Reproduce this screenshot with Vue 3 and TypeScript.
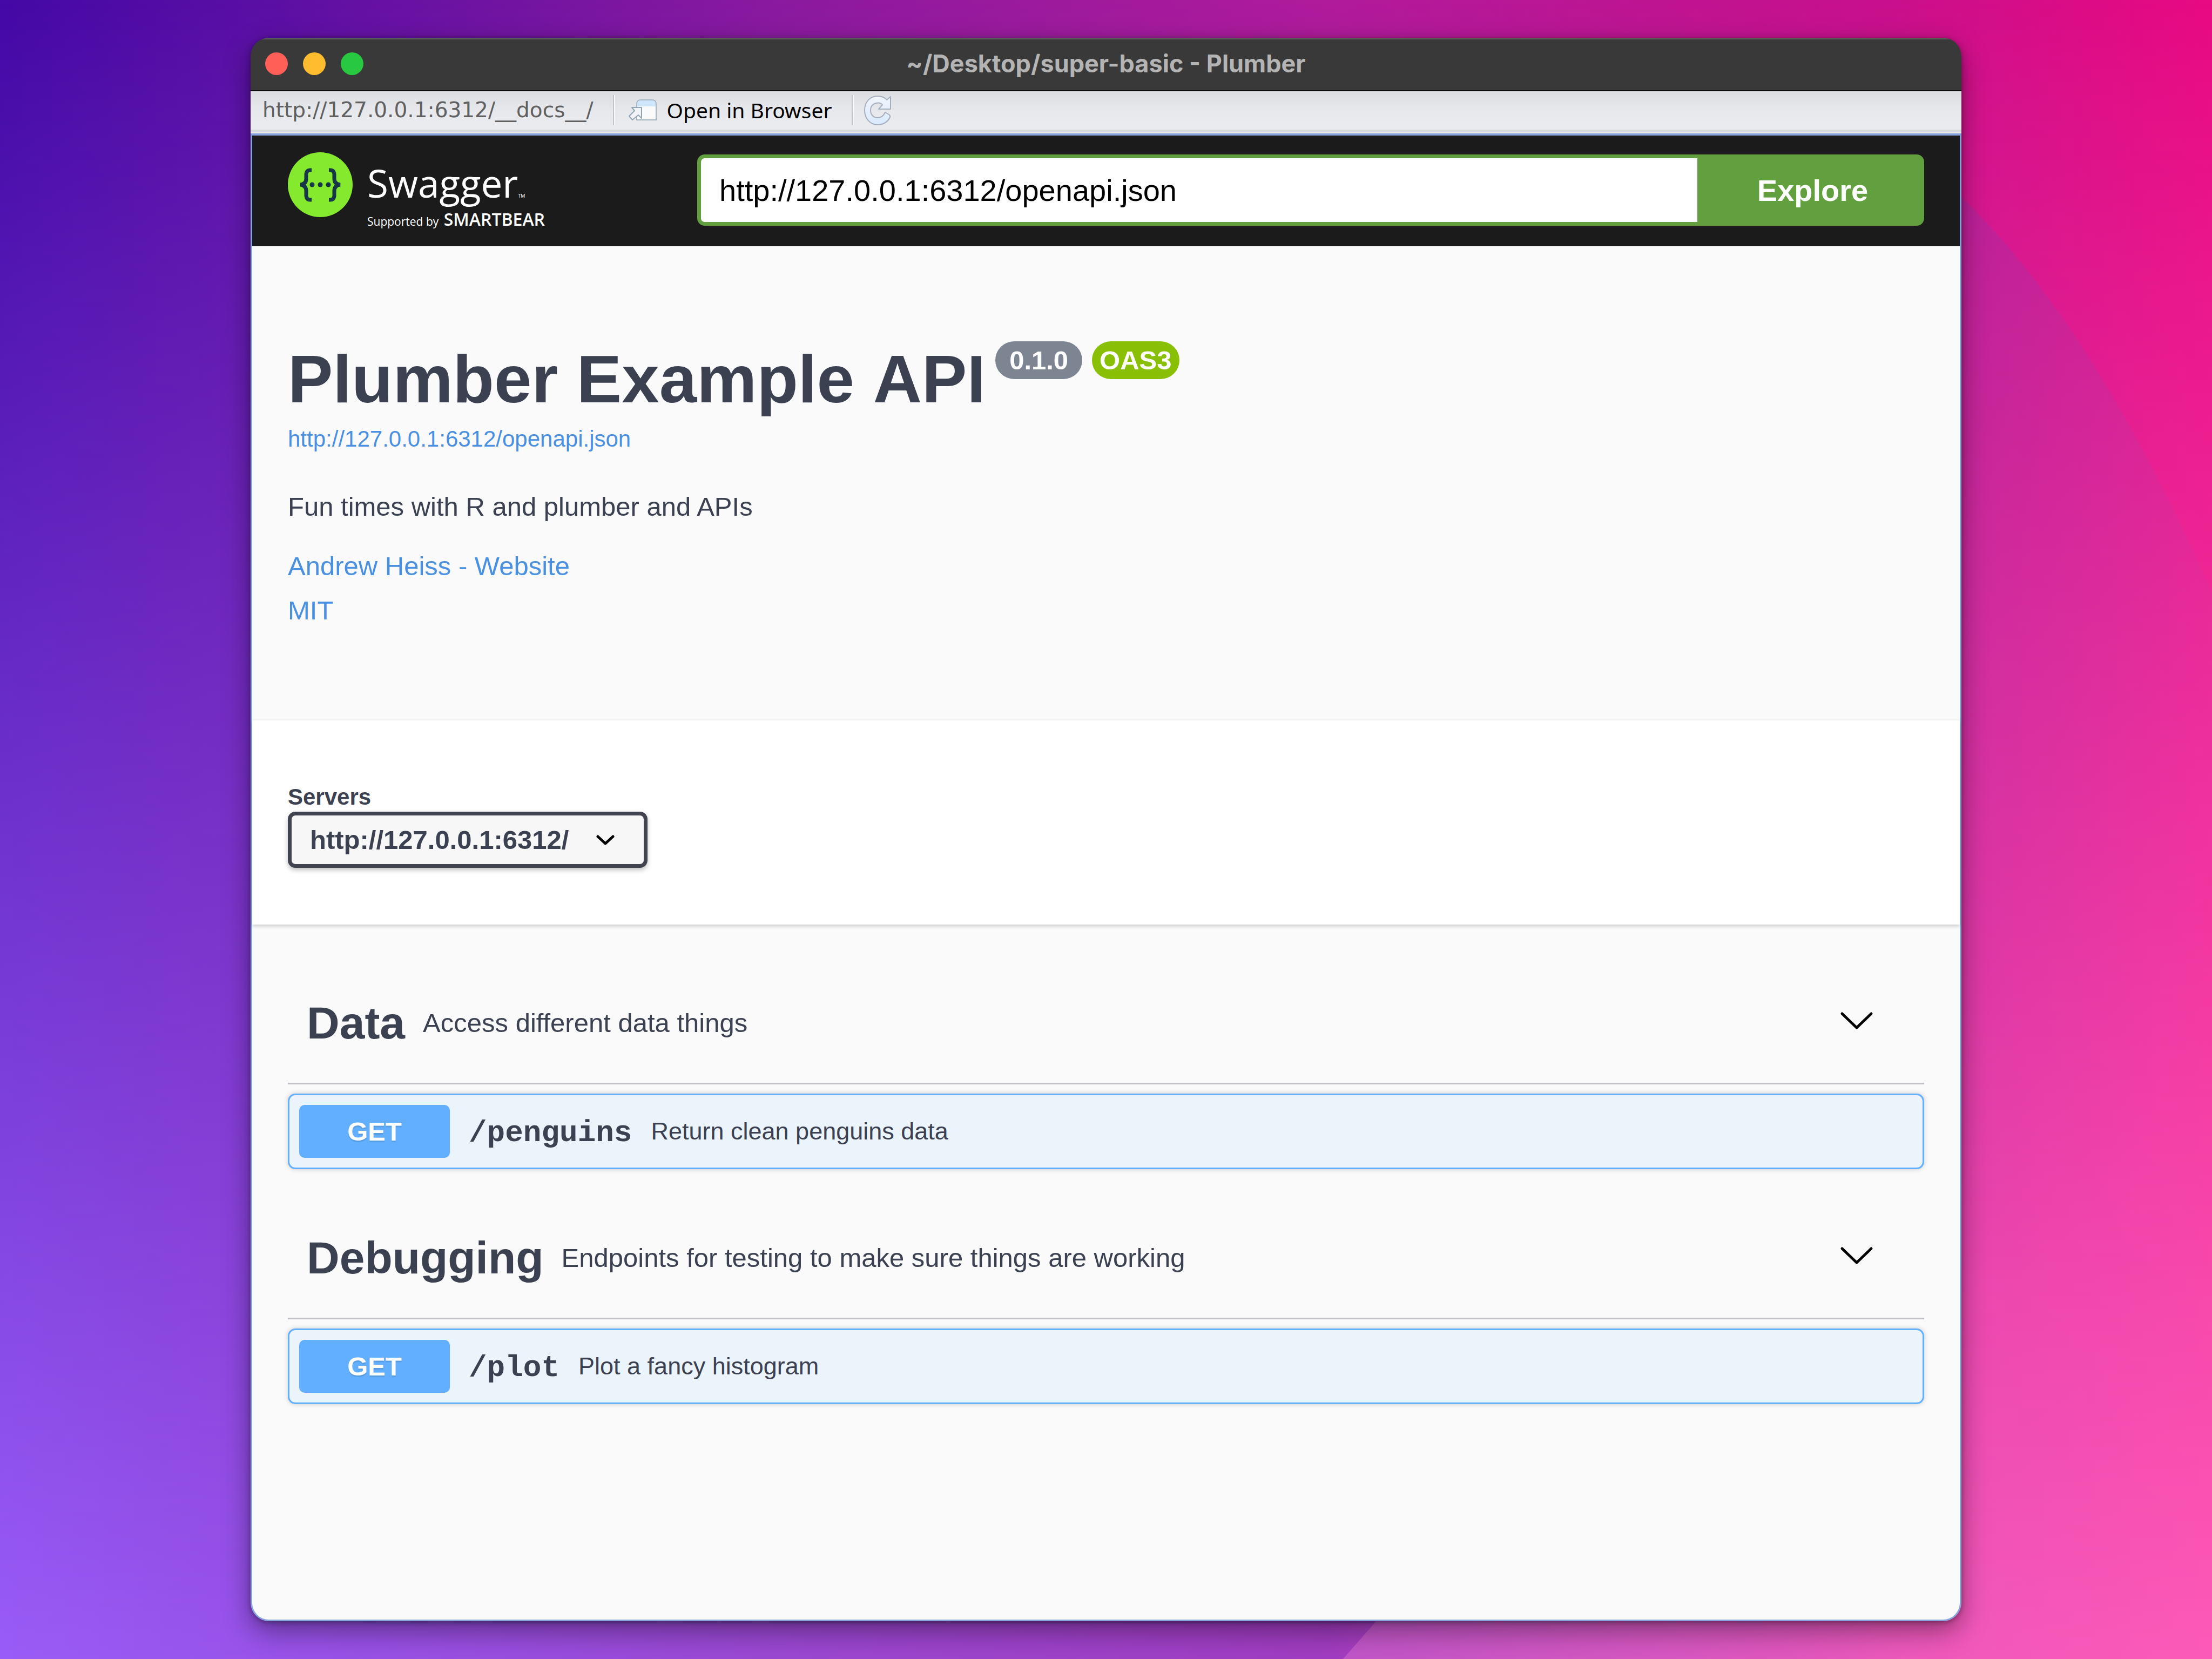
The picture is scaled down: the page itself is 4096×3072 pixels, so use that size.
<script setup lang="ts">
import { ref } from 'vue'

interface Operation {
  method: string
  path: string
  summary: string
}

interface Tag {
  name: string
  description: string
  operations: Operation[]
}

const specUrl = ref('http://127.0.0.1:6312/openapi.json')
const server = ref('http://127.0.0.1:6312/')

const tags: Tag[] = [
  {
    name: 'Data',
    description: 'Access different data things',
    operations: [{ method: 'GET', path: '/penguins', summary: 'Return clean penguins data' }],
  },
  {
    name: 'Debugging',
    description: 'Endpoints for testing to make sure things are working',
    operations: [{ method: 'GET', path: '/plot', summary: 'Plot a fancy histogram' }],
  },
]
</script>

<template>
  <div class="desktop">
    <svg class="wallpaper" viewBox="0 0 1568 1176" preserveAspectRatio="none" aria-hidden="true">
      <defs>
        <linearGradient id="wall-top" x1="0" y1="0" x2="1" y2="0">
          <stop offset="0" stop-color="#4409a6" />
          <stop offset="0.12" stop-color="#5b0fa4" />
          <stop offset="0.35" stop-color="#8a1a9f" />
          <stop offset="0.6" stop-color="#b01b9b" />
          <stop offset="0.85" stop-color="#c8108c" />
          <stop offset="1" stop-color="#e80a82" />
        </linearGradient>
        <linearGradient id="wall-bottom" x1="0" y1="0" x2="1" y2="0">
          <stop offset="0" stop-color="#9a5cf6" />
          <stop offset="0.12" stop-color="#9853ea" />
          <stop offset="0.35" stop-color="#9a48d2" />
          <stop offset="0.6" stop-color="#a03cc0" />
          <stop offset="0.85" stop-color="#ef58ba" />
          <stop offset="1" stop-color="#fc5ab8" />
        </linearGradient>
        <linearGradient id="wall-fade" x1="0" y1="0" x2="0" y2="1">
          <stop offset="0" stop-color="#000" />
          <stop offset="1" stop-color="#fff" />
        </linearGradient>
        <mask id="wall-mask">
          <rect width="1568" height="1176" fill="url(#wall-fade)" />
        </mask>
        <linearGradient id="wall-wedge" x1="0" y1="0" x2="0.5" y2="1">
          <stop offset="0" stop-color="#a8269c" stop-opacity="0.6" />
          <stop offset="1" stop-color="#d83fae" stop-opacity="0" />
        </linearGradient>
        <linearGradient id="wall-pink" x1="0" y1="0" x2="1" y2="0">
          <stop offset="0" stop-color="#c055c8" />
          <stop offset="0.5" stop-color="#d957c0" />
          <stop offset="1" stop-color="#f25aba" stop-opacity="0" />
        </linearGradient>
      </defs>
      <rect width="1568" height="1176" fill="url(#wall-top)" />
      <rect width="1568" height="1176" fill="url(#wall-bottom)" mask="url(#wall-mask)" />
      <path d="M1380 130 Q1480 220 1568 420 V900 H1380 Z" fill="url(#wall-wedge)" />
      <path d="M952 1176 L1010 1110 H1460 V1176 Z" fill="url(#wall-pink)" />
    </svg>

    <main class="window">
      <header class="titlebar">
        <div class="lights">
          <button class="light close" type="button" aria-label="Close"></button>
          <button class="light minimise" type="button" aria-label="Minimise"></button>
          <button class="light zoom" type="button" aria-label="Zoom"></button>
        </div>
        <div class="window-title">~/Desktop/super-basic - Plumber</div>
        <div class="titlebar-end"></div>
      </header>

      <div class="toolbar">
        <span class="address">http://127.0.0.1:6312/__docs__/</span>
        <span class="separator"></span>
        <button class="tool open" type="button">
          <svg width="54" height="42" viewBox="0 0 54 42" aria-hidden="true">
            <path d="M16 39 V10 Q16 2 24 2 H44 Q52 2 52 10 V39 Z" fill="#f8fafc" stroke="#a3b4c3" stroke-width="2" />
            <path d="M17 14 V10 Q17 3 24 3 H44 Q51 3 51 10 V14 Z" fill="#cfe6fc" />
            <path d="M7 16 H25 V36 L19 30 L8 39 L2 32 L12 22 Z" fill="#f1f3f6" stroke="#93a4b3" stroke-width="2" stroke-linejoin="round" />
          </svg>
          <span>Open in Browser</span>
        </button>
        <span class="separator"></span>
        <button class="tool" type="button" aria-label="Refresh">
          <svg width="52" height="56" viewBox="0 0 52 56" aria-hidden="true">
            <defs>
              <linearGradient id="refresh-fill" x1="0" y1="0" x2="0" y2="1">
                <stop offset="0" stop-color="#f1f5fb" />
                <stop offset="1" stop-color="#d9eafd" />
              </linearGradient>
            </defs>
            <path
              d="M50 3 V26 H28 L35 18 C32 14 27 14 23 15 C16 17 13 22 13 28 C13 36 18 42 26 42 C32 42 37 39 40 32 L47 36 Q50 38 49 41 C45 50 36 55 26 55 C12 55 2 43 2 28 C2 13 12 2 26 2 C33 2 39 4 43 9 Z"
              fill="url(#refresh-fill)"
              stroke="#a6afbe"
              stroke-width="2"
              stroke-linejoin="round"
            />
          </svg>
        </button>
      </div>

      <div class="page">
        <div class="topbar">
          <a class="logo" href="#" aria-label="Swagger">
            <svg class="mark" width="120" height="120" viewBox="0 0 120 120" aria-hidden="true">
              <circle cx="60" cy="60" r="60" fill="#85ea2d" />
              <g fill="none" stroke="#173647" stroke-width="7">
                <path d="M44 33 H41 Q35 33 34 40 V49 Q34 59 23 60 Q34 61 34 72 V81 Q35 88 41 88 H44" />
                <path d="M76 33 H79 Q85 33 86 40 V49 Q86 59 97 60 Q86 61 86 72 V81 Q85 88 79 88 H76" />
              </g>
              <g fill="#173647">
                <circle cx="45" cy="60" r="4.5" />
                <circle cx="60" cy="60" r="4.5" />
                <circle cx="75" cy="60" r="4.5" />
              </g>
            </svg>
            <span class="wordmark">
              <span class="name">Swagger<small>TM</small></span>
              <span class="sponsor">Supported by <b>SMARTBEAR</b></span>
            </span>
          </a>
          <form class="explore" @submit.prevent>
            <input v-model="specUrl" type="text" aria-label="Definition URL" />
            <button type="submit">Explore</button>
          </form>
        </div>

        <section class="info">
          <div class="heading">
            <h1>Plumber Example API</h1>
            <span class="badge version">0.1.0</span>
            <span class="badge oas">OAS3</span>
          </div>
          <a class="spec-link" href="#">http://127.0.0.1:6312/openapi.json</a>
          <p>Fun times with R and plumber and APIs</p>
          <a class="contact" href="#">Andrew Heiss - Website</a>
          <a class="license" href="#">MIT</a>
        </section>

        <section class="servers">
          <label for="server">Servers</label>
          <div class="select">
            <select id="server" v-model="server">
              <option>http://127.0.0.1:6312/</option>
            </select>
            <svg width="34" height="20" viewBox="0 0 34 20" aria-hidden="true">
              <path d="M3 3 L17 16 L31 3" fill="none" stroke="#000" stroke-width="5" stroke-linecap="round" stroke-linejoin="round" />
            </svg>
          </div>
        </section>

        <div class="tags">
          <section v-for="tag in tags" :key="tag.name" class="tag">
            <header>
              <h2>{{ tag.name }}</h2>
              <span class="description">{{ tag.description }}</span>
              <button type="button" :aria-label="`Collapse ${tag.name}`">
                <svg width="70" height="70" viewBox="0 0 70 70" aria-hidden="true">
                  <path d="M9 18 L36 44 L63 18" fill="none" stroke="#000" stroke-width="5" stroke-linecap="round" stroke-linejoin="round" />
                </svg>
              </button>
            </header>
            <div v-for="operation in tag.operations" :key="operation.path" class="operation">
              <button class="method" type="button">{{ operation.method }}</button>
              <a class="path" href="#">{{ operation.path }}</a>
              <span class="summary">{{ operation.summary }}</span>
            </div>
          </section>
        </div>
      </div>
    </main>
  </div>
</template>

<style>
body {
  margin: 0;
}
</style>

<style scoped>
* {
  box-sizing: border-box;
}

button,
input,
select {
  margin: 0;
  border: 0;
  font-family: inherit;
}

button {
  padding: 0;
  background: none;
}

svg {
  display: block;
}

a {
  color: #4990e2;
  text-decoration: none;
}

.desktop {
  position: relative;
  display: flex;
  min-height: 100vh;
  padding: 70px 464px;
  overflow: hidden;
  font-family: "Liberation Sans", Arial, sans-serif;
  color: #3b4151;
}

.wallpaper {
  position: absolute;
  inset: 0;
  width: 100%;
  height: 100%;
}

.window {
  position: relative;
  display: flex;
  flex: 1;
  flex-direction: column;
  min-width: 0;
  overflow: hidden;
  border-radius: 34px;
  box-shadow: 0 18px 50px rgba(0, 0, 0, 0.4), 0 2px 10px rgba(0, 0, 0, 0.35);
}

.titlebar {
  display: flex;
  align-items: center;
  height: 99px;
  padding: 0 27px 4px;
  background: #393939;
  border-top: 3px solid #5a5a5a;
  border-bottom: 2px solid #0c0c0c;
}

.lights,
.titlebar-end {
  display: flex;
  flex: 1;
  gap: 28px;
}

.light {
  width: 42px;
  height: 42px;
  border-radius: 50%;
}

.close {
  background: #ff5f57;
}

.minimise {
  background: #febc2e;
}

.zoom {
  background: #28c840;
}

.window-title {
  font: 700 45px/56px Inter, sans-serif;
  color: #b4b4b4;
}

.toolbar {
  display: flex;
  align-items: center;
  height: 78px;
  padding: 0 22px 6px;
  background: linear-gradient(#dcdde1, #e8e9ed 50%, #ebecf0);
  border-bottom: 3px solid #e9ebef;
  box-shadow: inset 0 -4px #d7dadd;
}

.address {
  font: 39px/48px "DejaVu Sans", sans-serif;
  color: #606060;
}

.separator {
  width: 4px;
  height: 56px;
  margin: 0 18px 0 36px;
  background: linear-gradient(90deg, #c3c4c8 50%, #f8f8fa 50%);
}

.tool {
  display: flex;
  align-items: center;
  gap: 18px;
  font: 39px/48px "Noto Sans", sans-serif;
  color: #000;
}

.open {
  padding-left: 6px;
}

.page {
  display: flex;
  flex: 1;
  flex-direction: column;
  background: #fafafa;
  border: 3px solid #87a5da;
  border-top-width: 4px;
  border-radius: 0 0 34px 34px;
}

.topbar {
  display: flex;
  justify-content: space-between;
  height: 205px;
  padding: 31px 66px 38px;
  background: #1b1b1b;
}

.logo {
  display: flex;
  gap: 27px;
  color: #fff;
  font-family: "Open Sans", sans-serif;
}

.wordmark {
  display: flex;
  flex-direction: column;
  padding-top: 24px;
}

.name {
  font-size: 71px;
  line-height: 66px;
}

.name small {
  font-size: 9px;
}

.sponsor {
  font-size: 21px;
  line-height: 20px;
}

.sponsor b {
  margin-left: 4px;
  font-size: 32px;
  font-weight: 600;
}

.explore {
  display: flex;
  width: 2272px;
  height: 132px;
  margin-top: 4px;
}

.explore input {
  flex: 1;
  min-width: 0;
  padding: 0 34px;
  background: #fff;
  border: 7px solid #62a03f;
  border-right: 0;
  border-radius: 14px 0 0 14px;
  font-size: 56px;
  color: #000;
}

.explore button {
  width: 420px;
  padding-left: 7px;
  background: #62a03f;
  border-radius: 0 14px 14px 0;
  font-size: 56px;
  font-weight: 700;
  color: #fff;
}

.info {
  display: flex;
  flex-direction: column;
  align-items: flex-start;
  padding: 176px 66px 174px;
  font-size: 49px;
  line-height: 60px;
}

.heading {
  display: flex;
  align-items: flex-start;
  gap: 18px;
}

h1 {
  margin: 0;
  font-size: 125px;
  font-kerning: none;
  line-height: 140px;
}

.badge {
  padding: 0 14px;
  border-radius: 35px;
  font-weight: 700;
  line-height: 70px;
  color: #fff;
}

.version {
  padding: 0 26px;
  background: #7d8492;
}

.oas {
  background: #89bf04;
}

.spec-link {
  margin-top: 16px;
  font-size: 42px;
  line-height: 50px;
}

.info p {
  margin: 70px 0 50px;
}

.license {
  margin-top: 22px;
}

.servers {
  display: flex;
  flex-direction: column;
  align-items: flex-start;
  gap: 2px;
  padding: 117px 66px 105px;
  background: #fff;
  box-shadow: 0 3px 7px rgba(0, 0, 0, 0.2);
}

.servers label {
  font-size: 42px;
  font-weight: 700;
  line-height: 50px;
}

.select {
  position: relative;
}

.select select {
  display: block;
  height: 104px;
  padding: 0 138px 0 34px;
  appearance: none;
  background: #f7f7f7;
  border: 7px solid #41444e;
  border-radius: 14px;
  box-shadow: 0 4px 8px rgba(0, 0, 0, 0.25);
  font-size: 49px;
  font-weight: 700;
  color: #3b4151;
}

.select svg {
  position: absolute;
  top: 43px;
  right: 61px;
  pointer-events: none;
}

.tags {
  display: flex;
  flex-direction: column;
  gap: 52px;
  padding: 70px 66px;
}

.tag {
  display: flex;
  flex-direction: column;
  gap: 17px;
}

.tag header {
  display: flex;
  align-items: center;
  gap: 33px;
  height: 226px;
  padding: 0 91px 0 35px;
  border-bottom: 3px solid #c1c3c9;
}

h2 {
  margin: 0;
  font-size: 84px;
  line-height: 100px;
}

.description {
  flex: 1;
  font-size: 49px;
}

.operation {
  display: flex;
  align-items: center;
  gap: 35px;
  padding: 18px;
  background: #ebf3fb;
  border: 3px solid #61affe;
  border-radius: 14px;
  box-shadow: 0 0 10px rgba(0, 0, 0, 0.19);
}

.method {
  width: 279px;
  height: 98px;
  background: #61affe;
  border-radius: 10px;
  font-size: 49px;
  font-weight: 700;
  color: #fff;
  text-shadow: 0 3px 0 rgba(0, 0, 0, 0.1);
}

.path {
  padding-top: 6px;
  font: 700 56px/64px "Liberation Mono", monospace;
  color: #3b4151;
}

.summary {
  font-size: 45px;
}
</style>
